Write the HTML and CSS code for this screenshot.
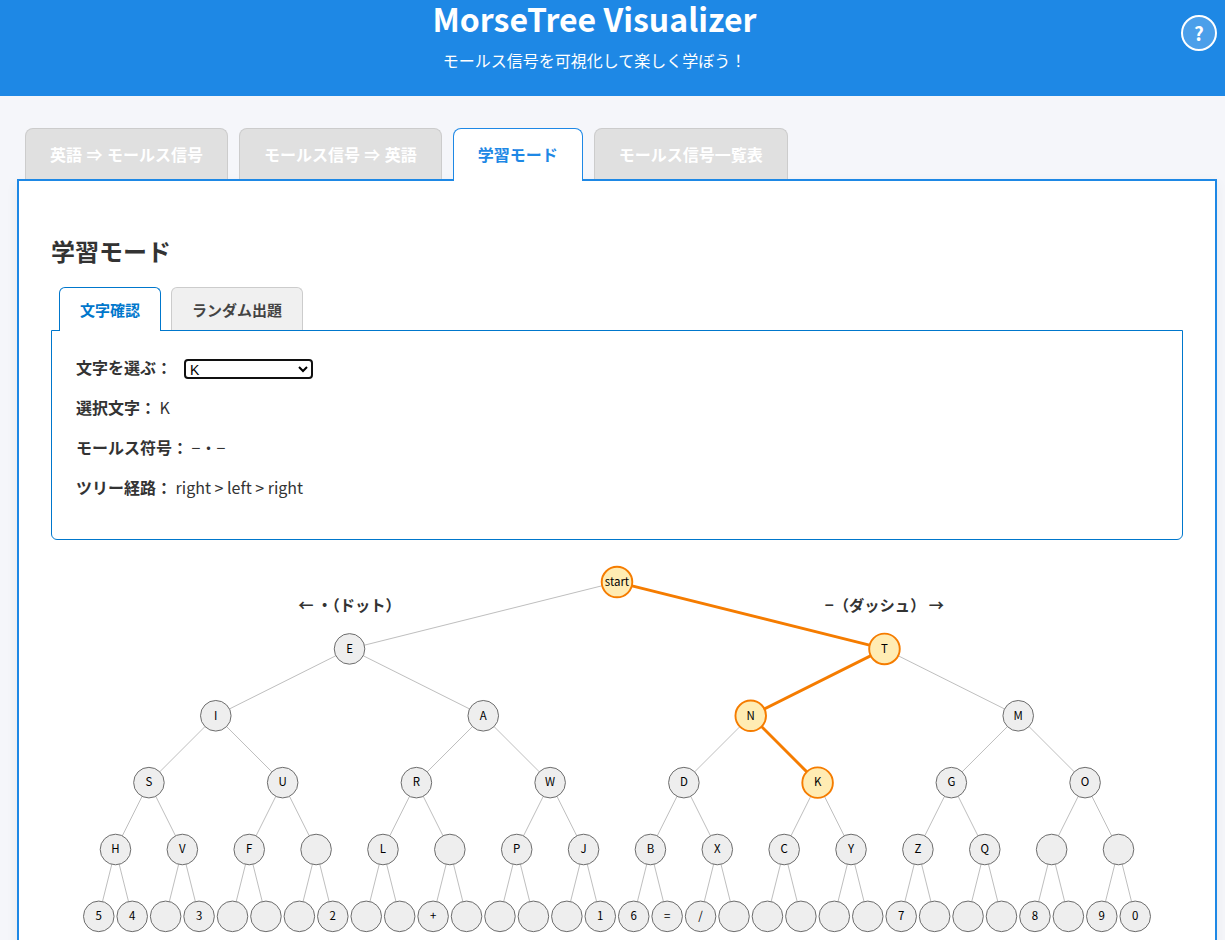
FILE: index.html
```html
<!DOCTYPE html>
<html lang="ja">
<head>
<meta charset="utf-8">
<meta name="viewport" content="width=device-width, initial-scale=1">
<title>MorseTree Visualizer</title>
<link rel="stylesheet" href="styles.css">
</head>
<body>
<header class="site-header">
  <div class="site-title">
    <h1>MorseTree Visualizer</h1>
    <p>モールス信号を可視化して楽しく学ぼう！</p>
  </div>
  <button class="help-button" type="button">?</button>
</header>
<main class="container">
  <nav class="tabs">
    <button class="tab" type="button">英語 ⇒ モールス信号</button>
    <button class="tab" type="button">モールス信号 ⇒ 英語</button>
    <button class="tab active" type="button">学習モード</button>
    <button class="tab" type="button">モールス信号一覧表</button>
  </nav>
  <section class="panel">
    <h2>学習モード</h2>
    <div class="subtabs">
      <button class="subtab active" type="button">文字確認</button>
      <button class="subtab" type="button">ランダム出題</button>
    </div>
    <div class="info">
      <p class="picker"><label for="letter">文字を選ぶ：</label>
        <select id="letter" class="letter-select"><option>K</option></select></p>
      <p><strong>選択文字：</strong> K</p>
      <p><strong>モールス符号：</strong> −・−</p>
      <p><strong>ツリー経路：</strong> right &gt; left &gt; right</p>
    </div>
    <svg class="tree" id="tree" viewBox="0 0 1185 440" role="img" aria-label="モールス信号ツリー"></svg>
  </section>
</main>
<script src="tree.js"></script>
</body>
</html>
```
FILE: styles.css
```css
* {
  box-sizing: border-box;
}

body {
  margin: 0;
  background: #f5f6fa;
  color: #333;
  font-family: "Noto Sans CJK JP", sans-serif;
  font-size: 16px;
  line-height: 24px;
}

button {
  font-family: inherit;
  cursor: pointer;
}

.site-header {
  display: flex;
  align-items: flex-start;
  padding: 0 8px 24px;
  background: #1e88e5;
  color: #fff;
}

.site-title {
  flex: 1;
  text-align: center;
}

.site-title h1 {
  margin: 0 0 12px;
  font-size: 32px;
  line-height: 36px;
}

.site-title p {
  margin: 0;
}

.help-button {
  width: 36px;
  height: 36px;
  margin-top: 15px;
  padding: 0;
  border: 2px solid #fff;
  border-radius: 50%;
  background: rgba(255, 255, 255, 0.2);
  color: #fff;
  font-size: 19px;
  font-weight: bold;
  line-height: 28px;
}

.container {
  margin: 32px 8px 0 17px;
}

.tabs {
  display: flex;
  gap: 11px;
  padding-left: 8px;
}

.tab {
  height: 51px;
  padding: 0 24px;
  border: 1px solid #ccc;
  border-bottom: none;
  border-radius: 8px 8px 0 0;
  background: #e0e0e0;
  color: #fff;
  font-family: "Liberation Sans", "Noto Sans CJK JP", sans-serif;
  font-size: 16px;
  font-weight: bold;
}

.tab.active {
  z-index: 1;
  height: 53px;
  margin-bottom: -2px;
  padding-bottom: 2px;
  border-color: #1e88e5;
  background: #fff;
  color: #1e88e5;
}

.panel {
  padding: 52px 32px 32px;
  border: 2px solid #1e88e5;
  background: #fff;
  box-shadow: 0 4px 12px rgba(0, 0, 0, 0.05);
}

.panel h2 {
  margin: 0 0 18px;
  font-size: 24px;
  line-height: 36px;
}

.subtabs {
  display: flex;
  gap: 10px;
  padding-left: 8px;
}

.subtab {
  height: 43px;
  padding: 0 20px;
  border: 1px solid #ccc;
  border-bottom: none;
  border-radius: 6px 6px 0 0;
  background: #f0f0f0;
  color: #444;
  font-size: 15px;
  font-weight: bold;
}

.subtab.active {
  z-index: 1;
  height: 44px;
  margin-bottom: -1px;
  background: #fff;
  border-color: #0077cc;
  color: #0077cc;
}

.info {
  padding: 24px 24px 40px;
  border: 1px solid #0077cc;
  border-radius: 0 0 6px 6px;
}

.info p {
  margin: 0 0 16px;
}

.info p:last-child {
  margin-bottom: 0;
}

.info .picker {
  display: flex;
  gap: 12px;
  align-items: flex-end;
}

.info label {
  font-weight: bold;
}

.letter-select {
  width: 129px;
  height: 20px;
  padding: 0;
  border: 2px solid #101010;
  border-radius: 4px;
  background-color: #fff;
  color: #000;
  font-family: "Liberation Sans", sans-serif;
  font-size: 14px;
}

.tree {
  display: block;
  width: 100%;
  height: auto;
}

.edge {
  stroke: #bbb;
  stroke-width: 1;
}

.edge.on {
  stroke: #f57c00;
  stroke-width: 3;
}

.node circle {
  fill: #eee;
  stroke: #666;
  stroke-width: 1;
}

.node.on circle {
  fill: #ffecb3;
  stroke: #f57c00;
  stroke-width: 2;
}

.node text {
  fill: #000;
  font-size: 12px;
  text-anchor: middle;
}

.direction {
  fill: #333;
  font-size: 16px;
  font-weight: bold;
  text-anchor: middle;
}
```
FILE: tree.js
```js
const levels = [
  ["start"],
  ["E", "T"],
  ["I", "A", "N", "M"],
  ["S", "U", "R", "W", "D", "K", "G", "O"],
  ["H", "V", "F", "", "L", "", "P", "J", "B", "X", "C", "Y", "Z", "Q", "", ""],
  ["5", "4", "", "3", "", "", "", "2", "", "", "+", "", "", "", "", "1",
   "6", "=", "/", "", "", "", "", "", "7", "", "", "", "8", "", "9", "0"]
];
const path = ["start", "T", "N", "K"];
const leafGap = 35;
const levelGap = 70;
const margin = 32.5;
const top0 = 44;
const radius = 16;

const svg = document.getElementById("tree");

function add(parent, name, attrs, text) {
  const el = document.createElementNS("http://www.w3.org/2000/svg", name);
  for (const key in attrs) el.setAttribute(key, attrs[key]);
  if (text) el.textContent = text;
  parent.appendChild(el);
  return el;
}

function position(level, index) {
  const span = leafGap * 32 / levels[level].length;
  return { x: margin + span * (index + 0.5), y: top0 + level * levelGap };
}

levels.forEach((row, level) => {
  if (level === 0) return;
  row.forEach((label, i) => {
    const a = position(level - 1, Math.floor(i / 2));
    const b = position(level, i);
    const on = path.includes(label);
    add(svg, "line", { class: on ? "edge on" : "edge", x1: a.x, y1: a.y, x2: b.x, y2: b.y });
  });
});

levels.forEach((row, level) => {
  row.forEach((label, i) => {
    const p = position(level, i);
    const g = add(svg, "g", { class: path.includes(label) ? "node on" : "node" });
    add(g, "circle", { cx: p.x, cy: p.y, r: radius });
    if (label) add(g, "text", { x: p.x, y: p.y + 4 }, label);
  });
});

add(svg, "text", { class: "direction", x: position(1, 0).x, y: 74 }, "← ・（ドット）");
add(svg, "text", { class: "direction", x: position(1, 1).x, y: 74 }, "−（ダッシュ） →");
```
